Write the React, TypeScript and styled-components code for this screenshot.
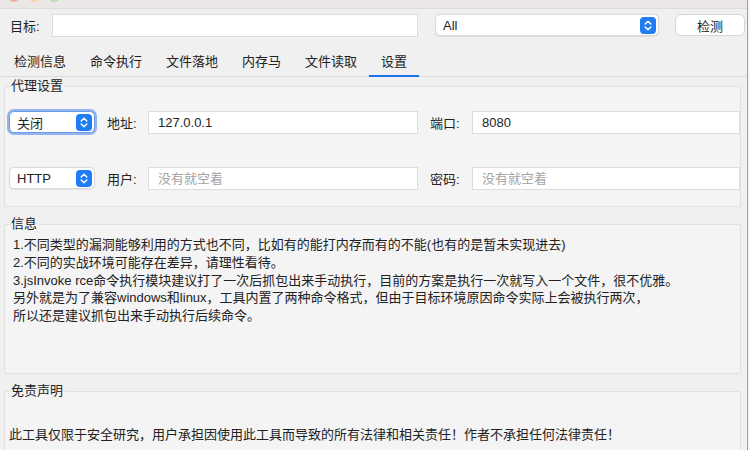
import React from "react";
import styled, { createGlobalStyle } from "styled-components";

const GlobalStyle = createGlobalStyle`
  html, body {
    margin: 0;
    padding: 0;
    background: #f7f7f7;
    overflow: hidden;
  }
  body {
    font-family: "Liberation Sans", "Noto Sans CJK SC", sans-serif;
    font-size: 13px;
    color: #222;
  }
`;

const Window = styled.div`
  width: 747px;
  height: 450px;
  background: #f0f0f0;
  border-right: 1px solid #9c9c9c;
  overflow: hidden;
  display: flex;
  flex-direction: column;
  & > * {
    flex-shrink: 0;
  }
`;

const TitleBar = styled.div`
  height: 8px;
  background: #ebe7e7;
  border-bottom: 1px solid #dcdcdc;
  display: flex;
  gap: 8px;
  padding-left: 8px;
  overflow: hidden;
`;

const Light = styled.span<{ $color: string }>`
  width: 12px;
  height: 12px;
  margin-top: -10px;
  border-radius: 50%;
  background: ${(p) => p.$color};
`;

const TopRow = styled.div`
  display: flex;
  align-items: center;
  height: 24px;
  margin-top: 4px;
  padding-left: 10px;
`;

const Label = styled.span<{ $w?: number }>`
  width: ${(p) => (p.$w ? `${p.$w}px` : "auto")};
  flex: none;
  white-space: nowrap;
`;

const TextInput = styled.input<{ $w?: number }>`
  box-sizing: border-box;
  width: ${(p) => (p.$w ? `${p.$w}px` : "auto")};
  flex: ${(p) => (p.$w ? "none" : "1")};
  min-width: 0;
  height: 23px;
  border: 1px solid #dcdcdc;
  background: #fff;
  padding: 0 9px;
  font-family: "Liberation Sans", "Noto Sans CJK SC", sans-serif;
  font-size: 13px;
  color: #222;
  outline: none;
  &::placeholder {
    color: #a3a3a3;
  }
`;

const Select = styled.div<{ $w: number; $focus?: boolean }>`
  box-sizing: border-box;
  width: ${(p) => p.$w}px;
  flex: none;
  height: 22px;
  background: #fff;
  border-radius: 5px;
  border: 1px solid ${(p) => (p.$focus ? "#6d9de6" : "#dadada")};
  box-shadow: ${(p) =>
    p.$focus ? "0 0 0 2px rgba(64, 128, 235, 0.55)" : "0 0.5px 1px rgba(0,0,0,0.08)"};
  display: flex;
  align-items: center;
  justify-content: space-between;
  padding: 0 2px 0 7px;
`;

const Stepper = styled.span`
  width: 16px;
  height: 17px;
  border-radius: 4px;
  background: #1f7cf4;
  display: flex;
  align-items: center;
  justify-content: center;
`;

const Button = styled.button`
  box-sizing: border-box;
  width: 70px;
  height: 22px;
  margin-left: 16px;
  background: #fff;
  border: 1px solid #d6d6d6;
  border-radius: 6px;
  font-family: "Liberation Sans", "Noto Sans CJK SC", sans-serif;
  font-size: 13px;
  color: #222;
  padding: 0;
`;

const Tabs = styled.div`
  display: flex;
  margin-top: 9px;
  padding-left: 2px;
  border-bottom: 1px solid #d9d9d9;
`;

const Tab = styled.div<{ $active?: boolean }>`
  height: 31px;
  box-sizing: border-box;
  padding: 0 12px;
  display: flex;
  align-items: center;
  border-bottom: 2px solid ${(p) => (p.$active ? "#1a73e8" : "transparent")};
  margin-bottom: -1px;
`;

const Group = styled.fieldset`
  margin: 1px 6px 0 4px;
  border: 1px solid #e0e0e0;
  border-radius: 2px;
  background: #f4f4f4;
  padding: 0 0 0 4px;
  min-width: 0;
  & + & {
    margin-top: 9px;
  }
`;

const Legend = styled.legend`
  margin-left: 2px;
  padding: 0 2px 0 0;
  line-height: 16px;
  font-size: 13px;
`;

const ProxyBody = styled.div`
  display: flex;
  flex-direction: column;
  gap: 32px;
  padding: 16px 0 16px 0;
`;

const ProxyRow = styled.div`
  display: flex;
  align-items: center;
  height: 24px;
`;

const Info = styled.div`
  height: 141px;
  padding: 4px 0 0 4px;
  box-sizing: border-box;
  line-height: 17.8px;
`;

const Disclaimer = styled.div`
  height: 80px;
  padding: 27px 0 0 0;
  box-sizing: border-box;
  line-height: 17.5px;
`;

const StepIcon = () => (
  <svg width="10" height="13" viewBox="0 0 10 13" fill="none">
    <path d="M2.2 5 L5 2.2 L7.8 5" stroke="#fff" strokeWidth="1.5" strokeLinecap="round" strokeLinejoin="round" />
    <path d="M2.2 8 L5 10.8 L7.8 8" stroke="#fff" strokeWidth="1.5" strokeLinecap="round" strokeLinejoin="round" />
  </svg>
);

const tabs = ["检测信息", "命令执行", "文件落地", "内存马", "文件读取", "设置"];

const infoLines = [
  "1.不同类型的漏洞能够利用的方式也不同，比如有的能打内存而有的不能(也有的是暂未实现进去)",
  "2.不同的实战环境可能存在差异，请理性看待。",
  "3.jsInvoke rce命令执行模块建议打了一次后抓包出来手动执行，目前的方案是执行一次就写入一个文件，很不优雅。",
  "另外就是为了兼容windows和linux，工具内置了两种命令格式，但由于目标环境原因命令实际上会被执行两次，",
  "所以还是建议抓包出来手动执行后续命令。",
];

export default function App() {
  return (
    <>
      <GlobalStyle />
      <Window>
        <TitleBar>
          <Light $color="#f4a9a3" />
          <Light $color="#f3d9a0" />
          <Light $color="#b9dfae" />
        </TitleBar>

        <TopRow>
          <Label $w={42}>目标:</Label>
          <TextInput $w={366} />
          <Select $w={224} style={{ marginLeft: 17 }}>
            <span>All</span>
            <Stepper>
              <StepIcon />
            </Stepper>
          </Select>
          <Button>检测</Button>
        </TopRow>

        <Tabs>
          {tabs.map((t) => (
            <Tab key={t} $active={t === "设置"}>
              {t}
            </Tab>
          ))}
        </Tabs>

        <Group>
          <Legend>代理设置</Legend>
          <ProxyBody>
            <ProxyRow>
              <Select $w={86} $focus>
                <span>关闭</span>
                <Stepper>
                  <StepIcon />
                </Stepper>
              </Select>
              <Label $w={41} style={{ marginLeft: 12 }}>地址:</Label>
              <TextInput $w={270} defaultValue="127.0.0.1" />
              <Label $w={42} style={{ marginLeft: 12 }}>端口:</Label>
              <TextInput defaultValue="8080" />
            </ProxyRow>
            <ProxyRow>
              <Select $w={86}>
                <span>HTTP</span>
                <Stepper>
                  <StepIcon />
                </Stepper>
              </Select>
              <Label $w={41} style={{ marginLeft: 12 }}>用户:</Label>
              <TextInput $w={270} placeholder="没有就空着" />
              <Label $w={42} style={{ marginLeft: 12 }}>密码:</Label>
              <TextInput placeholder="没有就空着" />
            </ProxyRow>
          </ProxyBody>
        </Group>

        <Group>
          <Legend>信息</Legend>
          <Info>
            {infoLines.map((l) => (
              <div key={l}>{l}</div>
            ))}
          </Info>
        </Group>

        <Group>
          <Legend>免责声明</Legend>
          <Disclaimer>
            此工具仅限于安全研究，用户承担因使用此工具而导致的所有法律和相关责任！作者不承担任何法律责任！
          </Disclaimer>
        </Group>
      </Window>
    </>
  );
}
